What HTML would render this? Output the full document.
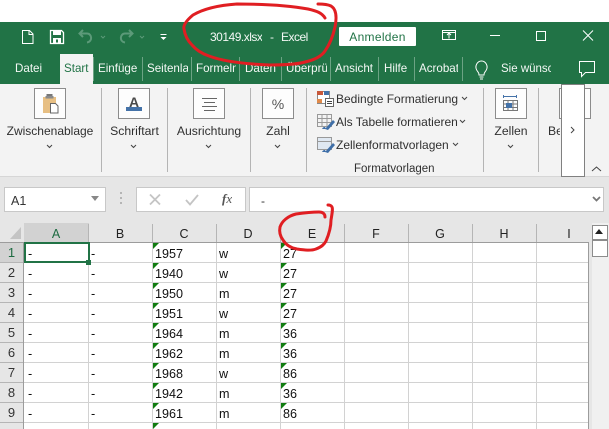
<!DOCTYPE html>
<html><head><meta charset="utf-8">
<style>
html,body{margin:0;padding:0}
body{width:609px;height:429px;overflow:hidden;position:relative;background:#e6e6e6;font-family:"Liberation Sans",sans-serif;font-size:12px;color:#262626}
div,svg{position:absolute}
.t{white-space:nowrap;line-height:16px;height:16px;overflow:hidden}
.tab{color:#f4f8f5;top:61px;font-size:11.600px}
.sep{top:57px;width:1px;height:24px;background:#6ca384}
.rs{top:88px;width:1px;height:84px;background:#b4b4b4}
.box{top:88px;width:30px;height:29px;border:1px solid #8c8c8c;background:#fdfdfd}
.lb{top:123px;text-align:center;font-size:12.200px;color:#303030}
.hd{top:224px;height:18px;line-height:20px;width:64px;text-align:center;font-size:12.500px;color:#222;border-right:1px solid #b5b5b5}
.vl{top:243px;width:1px;height:186px;background:#d2d2d2}
.hl{left:24px;width:564px;height:1px;background:#d2d2d2}
.rh{left:0;width:23px;height:19px;line-height:20px;text-align:center;font-size:13px;color:#333;background:#e6e6e6;border-bottom:1px solid #b5b5b5}
.c{height:18px;line-height:20px;font-size:12.600px;color:#111;white-space:nowrap}
.tri{width:0;height:0;border-top:6px solid #107c10;border-right:6px solid transparent}
.ti{top:29px;color:#f4f8f5;font-size:12px;letter-spacing:-.5px}
</style></head><body>
<div style="left:0;top:0;width:609px;height:22px;background:#fff"></div>
<div style="left:0;top:22px;width:609px;height:62px;background:#217346"></div>
<!-- QAT -->
<svg style="left:0;top:22px" width="200" height="32" viewBox="0 22 200 32" fill="none">
<path d="M22.500 30.500h7l3.500 3.500v9.500h-10.500zM29 30.500v4h4" stroke="#fff" stroke-width="1"/>
<path d="M50.500 30.500h11l2 2v11h-13z" stroke="#fff" stroke-width="1.300"/><rect x="53" y="30" width="8" height="5" fill="#fff"/><rect x="53" y="38" width="8" height="5.500" fill="#fff"/><rect x="56" y="39.500" width="2" height="3" fill="#217346"/>
<path d="M83 30l-3.500 3.500 3.500 3.500M80 33.500h7c5 0 6 8 0 9" stroke="#5c9a79" stroke-width="2"/>
<path d="M101 36l2 2 2-2" stroke="#5c9a79"/>
<path d="M129 30l3.500 3.500-3.500 3.500M132 33.500h-7c-5 0-6 8 0 9" stroke="#5c9a79" stroke-width="2"/>
<path d="M140 36l2 2 2-2" stroke="#5c9a79"/>
<path d="M160.500 34.500h6" stroke="#fff"/><path d="M160.500 37h6l-3 3z" fill="#fff"/>
</svg>
<div class="t ti" style="left:210px">30149.xlsx</div>
<div class="t ti" style="left:270px">-</div>
<div class="t ti" style="left:281px">Excel</div>
<div style="left:339px;top:27px;width:77px;height:19px;background:#fff;border-radius:1px;color:#217346;text-align:center;line-height:20px;font-size:12px;letter-spacing:.3px">Anmelden</div>
<svg style="left:430px;top:24px" width="179" height="26" viewBox="430 24 179 26" fill="none" stroke="#fff">
<path d="M442.500 30.500h13v9h-13zM442.500 32.500h13"/><path d="M449 38.500v-5M447 35l2-2 2 2"/>
<path d="M490 35.500h10"/>
<path d="M536.500 31.500h9v9h-9z"/>
<path d="M583 30.500l10 10M593 30.500l-10 10"/>
</svg>
<!-- tabs -->
<div style="left:60px;top:54px;width:33px;height:31px;background:#f3f3f3"></div>
<div class="t tab" style="left:15px;width:30px">Datei</div>
<div class="t tab" style="left:64px;width:28px;color:#217346">Start</div>
<div class="t tab" style="left:98px;width:41px">Einfüge</div>
<div class="t tab" style="left:147px;width:41px">Seitenla</div>
<div class="t tab" style="left:196px;width:40px">Formeln</div>
<div class="t tab" style="left:245px;width:32px">Daten</div>
<div class="t tab" style="left:286px;width:41px">Überprüfen</div>
<div class="t tab" style="left:335px;width:40px">Ansicht</div>
<div class="t tab" style="left:384px;width:27px">Hilfe</div>
<div class="t tab" style="left:419px;width:39px">Acrobat</div>
<div class="t tab" style="left:501px;width:50px;font-size:11.500px">Sie wünschen</div>
<div class="sep" style="left:93px"></div><div class="sep" style="left:142px"></div><div class="sep" style="left:191px"></div><div class="sep" style="left:239px"></div><div class="sep" style="left:281px"></div><div class="sep" style="left:330px"></div><div class="sep" style="left:378px"></div><div class="sep" style="left:414px"></div><div class="sep" style="left:462px"></div>
<svg style="left:470px;top:56px" width="139" height="28" viewBox="470 56 139 28" fill="none" stroke="#fff">
<path d="M478 72c-5-6 0-11 3.500-11s8.500 5 3.500 11c-1 1-1 2-1 3h-5c0-1 0-2-1-3zM479.500 77h4M480 79h3"/>
<path d="M579.500 61.500h15v11h-9l-4 4v-4h-2z"/>
</svg>
<!-- ribbon -->
<div style="left:0;top:84px;width:609px;height:92px;background:#f3f3f3;border-bottom:1px solid #d6d6d6"></div>
<div class="rs" style="left:101px"></div><div class="rs" style="left:167px"></div><div class="rs" style="left:250px"></div><div class="rs" style="left:306px"></div><div class="rs" style="left:483px"></div><div class="rs" style="left:538px"></div>
<div class="box" style="left:34px"></div><div class="box" style="left:118px"></div><div class="box" style="left:193px"></div><div class="box" style="left:262px"></div><div class="box" style="left:495px"></div><div class="box" style="left:559px"></div>
<svg style="left:34px;top:88px" width="32" height="31" viewBox="34 88 32 31" fill="none">
<path d="M43 97h13v6h-6v10h-7z" fill="#e7bf83"/><path d="M47 96.500h5v-2h-5z" fill="#777" stroke="#777"/><rect x="45.500" y="96" width="8" height="2.500" fill="#8a8a8a"/>
<path d="M50.500 103.500h5l2.500 2.500v7h-7.500z" fill="#fff" stroke="#666"/>
</svg>
<svg style="left:118px;top:88px" width="32" height="31" viewBox="118 88 32 31">
<text x="134" y="107" text-anchor="middle" font-family="Liberation Sans" font-size="14" font-weight="bold" fill="#4a4a4a">A</text><rect x="126" y="107" width="16" height="4" fill="#4472a8"/>
</svg>
<svg style="left:193px;top:88px" width="32" height="31" viewBox="193 88 32 31" stroke="#666" fill="none">
<path d="M202 98.500h15M204 102.500h11M202 106.500h15M204 110.500h11"/>
</svg>
<svg style="left:262px;top:88px" width="32" height="31" viewBox="262 88 32 31">
<text x="278" y="109" text-anchor="middle" font-family="Liberation Sans" font-size="14" fill="#555">%</text>
</svg>
<svg style="left:495px;top:88px" width="32" height="31" viewBox="495 88 32 31" fill="none" stroke="#777">
<path d="M503 96.500h14" stroke="#4472a8"/><path d="M503.500 95v3M516.500 95v3" stroke="#4472a8"/>
<path d="M503.500 100.500h14v10h-14zM503.500 104h14M503.500 107.500h14M508 100v11M513 100v11"/><rect x="506" y="103" width="6" height="5" fill="#4472a8" stroke="none"/>
</svg>
<div class="t lb" style="left:0;width:100px;font-size:12px">Zwischenablage</div>
<div class="t lb" style="left:102px;width:65px">Schriftart</div>
<div class="t lb" style="left:168px;width:82px">Ausrichtung</div>
<div class="t lb" style="left:251px;width:54px">Zahl</div>
<div class="t lb" style="left:484px;width:54px">Zellen</div>
<div class="t lb" style="left:548px;width:12px;text-align:left">Be</div>
<svg style="left:0;top:140px" width="530" height="12" viewBox="0 140 530 12" fill="none" stroke="#444">
<path d="M47 145l2.500 2.500 2.500-2.500M131 145l2.500 2.500 2.500-2.500M206 145l2.500 2.500 2.500-2.500M275 145l2.500 2.500 2.500-2.500M508 145l2.500 2.500 2.500-2.500"/>
</svg>
<svg style="left:315px;top:88px" width="22" height="70" viewBox="315 88 22 70" fill="none">
<rect x="317.500" y="91.500" width="12" height="12" stroke="#888" fill="#fff"/><rect x="317" y="91" width="6" height="4" fill="#c8583a"/><rect x="317" y="99" width="5" height="4" fill="#e08a4a"/><rect x="324" y="91" width="5" height="4" fill="#4472a8"/>
<rect x="325.500" y="98.500" width="8" height="8" fill="#fff" stroke="#666"/><path d="M327 101.500h5M327 103.500h5" stroke="#444"/>
<path d="M317.500 114.500h14v12h-14zM317.500 118.500h14M317.500 122.500h14M322 114v12M327 114v12" stroke="#999"/><path d="M325 129l8-9 2 2-7 8z" fill="#3f6fa8"/><path d="M322 129c1-2 2-2 3-2l1 2z" fill="#3f6fa8"/>
<path d="M317.500 137.500h14v12h-14z" stroke="#999" fill="#dfe8f2"/><path d="M317.500 137.500h14v4h-14z" stroke="#999"/><path d="M325 152l8-9 2 2-7 8z" fill="#3f6fa8"/><path d="M322 152c1-2 2-2 3-2l1 2z" fill="#3f6fa8"/>
</svg>
<div class="t" style="left:336px;top:91px;font-size:12px;color:#303030">Bedingte Formatierung</div>
<div class="t" style="left:336px;top:114px;font-size:12px;color:#303030">Als Tabelle formatieren</div>
<div class="t" style="left:336px;top:137px;font-size:12px;color:#303030">Zellenformatvorlagen</div>
<div class="t" style="left:354px;top:161px;width:80px;text-align:center;font-size:11.500px;color:#303030">Formatvorlagen</div>
<svg style="left:440px;top:92px" width="30" height="60" viewBox="440 92 30 60" fill="none" stroke="#444">
<path d="M462 97l2.500 2.500 2.500-2.500M460 120l2.500 2.500 2.500-2.500M453 143l2.500 2.500 2.500-2.500"/>
</svg>
<div style="left:561px;top:84px;width:22px;height:91px;background:#fff;border:1px solid #808080"></div>
<svg style="left:566px;top:122px" width="12" height="14" fill="none" stroke="#444"><path d="M5 5l3 3-3 3"/></svg>
<svg style="left:590px;top:163px" width="14" height="10" fill="none" stroke="#444"><path d="M2 8l4.500-4 4.500 4"/></svg>
<!-- formula bar -->
<div style="left:4px;top:187px;width:100px;height:23px;background:#fff;border:1px solid #c8c8c8"></div>
<div class="t" style="left:11px;top:193px;font-size:12.500px;color:#333">A1</div>
<svg style="left:90px;top:195px" width="12" height="8"><path d="M1 1h8l-4 5z" fill="#888"/></svg>
<svg style="left:118px;top:192px" width="8" height="16" fill="#b5b5b5"><rect x="2" y="0" width="2" height="2"/><rect x="2" y="5" width="2" height="2"/><rect x="2" y="10" width="2" height="2"/></svg>
<div style="left:136px;top:187px;width:108px;height:23px;background:#fff;border:1px solid #c8c8c8"></div>
<svg style="left:136px;top:187px" width="100" height="26" viewBox="136 187 100 26" fill="none" stroke="#c4c4c4" stroke-width="1.800">
<path d="M150 194.500l10 10M160 194.500l-10 10"/><path d="M186 200l4 4.500 8-9.500"/>
</svg>
<div class="t" style="left:222px;top:191px;font-family:'Liberation Serif',serif;font-style:italic;font-size:13px;color:#555"><b>f</b>x</div>
<div style="left:249px;top:187px;width:353px;height:23px;background:#fff;border:1px solid #c8c8c8"></div>
<div class="t" style="left:261px;top:193px;font-size:12px;color:#333">-</div>
<svg style="left:592px;top:196px" width="12" height="8" fill="none" stroke="#777" stroke-width="1.800"><path d="M1 1l3.500 3.500 3.500-3.500"/></svg>
<!-- grid -->
<div style="left:24px;top:243px;width:565px;height:186px;background:#fff"></div>
<div style="left:0;top:223px;width:589px;height:19px;background:#e6e6e6;border-bottom:1px solid #9c9c9c"></div>
<svg style="left:9px;top:226px" width="13" height="14"><path d="M12 1v12H1z" fill="#c4c4c4"/></svg>
<div style="left:24px;top:223px;width:65px;height:19px;background:#d2d2d2;border-bottom:1px solid #217346"></div>
<div class="hd" style="left:24px;color:#1d6b41">A</div><div class="hd" style="left:88px">B</div><div class="hd" style="left:152px">C</div><div class="hd" style="left:216px">D</div><div class="hd" style="left:280px">E</div><div class="hd" style="left:344px">F</div><div class="hd" style="left:408px">G</div><div class="hd" style="left:472px">H</div><div class="hd" style="left:536px;width:66px;border:0">I</div>
<div class="vl" style="left:88px"></div><div class="vl" style="left:152px"></div><div class="vl" style="left:216px"></div><div class="vl" style="left:280px"></div><div class="vl" style="left:344px"></div><div class="vl" style="left:408px"></div><div class="vl" style="left:472px"></div><div class="vl" style="left:536px"></div>
<div class="hl" style="top:262px"></div><div class="hl" style="top:282px"></div><div class="hl" style="top:302px"></div><div class="hl" style="top:322px"></div><div class="hl" style="top:342px"></div><div class="hl" style="top:362px"></div><div class="hl" style="top:382px"></div><div class="hl" style="top:402px"></div><div class="hl" style="top:422px"></div>
<div style="left:23px;top:242px;width:1px;height:187px;background:#9c9c9c"></div>
<div class="rh" style="top:243px;background:#d2d2d2;color:#1d6b41">1</div><div class="rh" style="top:263px">2</div><div class="rh" style="top:283px">3</div><div class="rh" style="top:303px">4</div><div class="rh" style="top:323px">5</div><div class="rh" style="top:343px">6</div><div class="rh" style="top:363px">7</div><div class="rh" style="top:383px">8</div><div class="rh" style="top:403px">9</div><div class="rh" style="top:423px;height:6px;border:0"></div>
<!-- cells -->
<div class="c" style="left:28px;top:244px">-</div><div class="c" style="left:91px;top:244px">-</div><div class="c" style="left:155px;top:244px">1957</div><div class="c" style="left:219px;top:244px">w</div><div class="c" style="left:283px;top:244px">27</div>
<div class="c" style="left:28px;top:264px">-</div><div class="c" style="left:91px;top:264px">-</div><div class="c" style="left:155px;top:264px">1940</div><div class="c" style="left:219px;top:264px">w</div><div class="c" style="left:283px;top:264px">27</div>
<div class="c" style="left:28px;top:284px">-</div><div class="c" style="left:91px;top:284px">-</div><div class="c" style="left:155px;top:284px">1950</div><div class="c" style="left:219px;top:284px">m</div><div class="c" style="left:283px;top:284px">27</div>
<div class="c" style="left:28px;top:304px">-</div><div class="c" style="left:91px;top:304px">-</div><div class="c" style="left:155px;top:304px">1951</div><div class="c" style="left:219px;top:304px">w</div><div class="c" style="left:283px;top:304px">27</div>
<div class="c" style="left:28px;top:324px">-</div><div class="c" style="left:91px;top:324px">-</div><div class="c" style="left:155px;top:324px">1964</div><div class="c" style="left:219px;top:324px">m</div><div class="c" style="left:283px;top:324px">36</div>
<div class="c" style="left:28px;top:344px">-</div><div class="c" style="left:91px;top:344px">-</div><div class="c" style="left:155px;top:344px">1962</div><div class="c" style="left:219px;top:344px">m</div><div class="c" style="left:283px;top:344px">36</div>
<div class="c" style="left:28px;top:364px">-</div><div class="c" style="left:91px;top:364px">-</div><div class="c" style="left:155px;top:364px">1968</div><div class="c" style="left:219px;top:364px">w</div><div class="c" style="left:283px;top:364px">86</div>
<div class="c" style="left:28px;top:384px">-</div><div class="c" style="left:91px;top:384px">-</div><div class="c" style="left:155px;top:384px">1942</div><div class="c" style="left:219px;top:384px">m</div><div class="c" style="left:283px;top:384px">36</div>
<div class="c" style="left:28px;top:404px">-</div><div class="c" style="left:91px;top:404px">-</div><div class="c" style="left:155px;top:404px">1961</div><div class="c" style="left:219px;top:404px">m</div><div class="c" style="left:283px;top:404px">86</div>
<!-- triangles -->
<div class="tri" style="left:153px;top:243px"></div><div class="tri" style="left:153px;top:263px"></div><div class="tri" style="left:153px;top:283px"></div><div class="tri" style="left:153px;top:303px"></div><div class="tri" style="left:153px;top:323px"></div><div class="tri" style="left:153px;top:343px"></div><div class="tri" style="left:153px;top:363px"></div><div class="tri" style="left:153px;top:383px"></div><div class="tri" style="left:153px;top:403px"></div><div class="tri" style="left:153px;top:423px"></div>
<div class="tri" style="left:281px;top:243px"></div><div class="tri" style="left:281px;top:263px"></div><div class="tri" style="left:281px;top:283px"></div><div class="tri" style="left:281px;top:303px"></div><div class="tri" style="left:281px;top:323px"></div><div class="tri" style="left:281px;top:343px"></div><div class="tri" style="left:281px;top:363px"></div><div class="tri" style="left:281px;top:383px"></div><div class="tri" style="left:281px;top:403px"></div>
<!-- selection -->
<div style="left:24px;top:242px;width:62px;height:17px;border:2px solid #217346"></div>
<div style="left:86px;top:260px;width:5px;height:5px;background:#217346"></div>
<!-- scrollbar -->
<div style="left:588px;top:242px;width:1px;height:187px;background:#9c9c9c"></div>
<div style="left:592px;top:223px;width:17px;height:206px;background:#f0f0f0"></div>
<div style="left:592px;top:225px;width:14px;height:13px;background:#fff;border:1px solid #8c8c8c"></div>
<svg style="left:594px;top:228px" width="12" height="8"><path d="M1 6h8L5 1z" fill="#222"/></svg>
<div style="left:592px;top:240px;width:14px;height:15px;background:#fff;border:1px solid #8c8c8c"></div>
<!-- red annotations -->
<svg style="left:0;top:0" width="609" height="429" viewBox="0 0 609 429" fill="none" stroke="#e01e22" stroke-width="3" stroke-linecap="round" stroke-linejoin="round">
<path d="M325 18C322 13 317 11 308 9C292 6 265 4 237 4C222 5 205 8 193 15C187 20 183 25 184 29C185 36 188 41 192 45C197 51 203 54 209 56C222 61 245 64 270 65C285 65 298 64 305 62C314 60 321 57 325 51C330 44 333 36 335 27C337 17 336 9 331 6C327 4 322 4 318 4"/>
<path d="M325 217C325 214 323 212 319 212C312 212 303 213 296 214C288 216 282 221 280 227C279 232 280 236 283 240C286 245 291 248 297 249C304 250 311 251 316 249C321 247 324 245 326 241C329 234 331 226 331 220C332 214 333 209 332 207C331 205 329 205 328 205"/>
</svg>
</body></html>
